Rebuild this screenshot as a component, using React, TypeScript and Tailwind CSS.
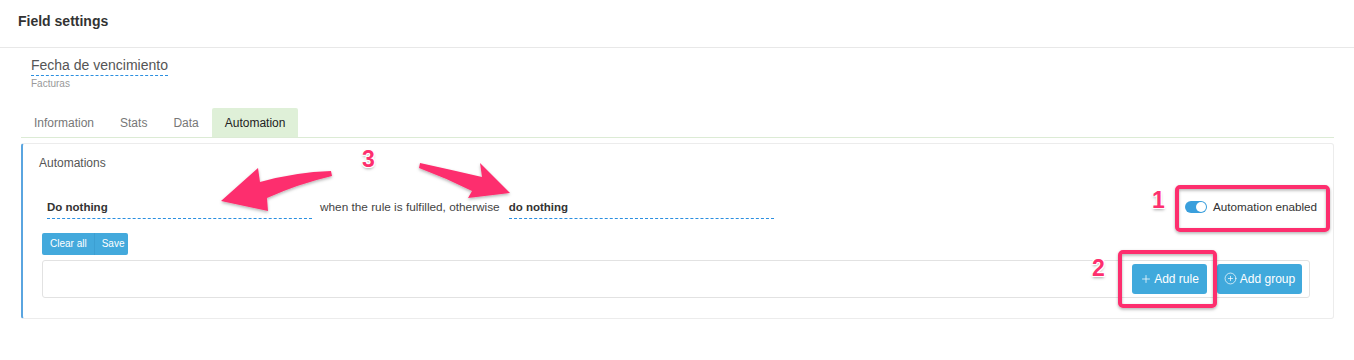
import { Plus, CirclePlus } from "lucide-react";

const PINK = "#fd2f6e";

// ─── Callout pieces (annotations drawn over the screenshot) ──────────
function Num({ n, x, y }: { n: string; x: number; y: number }) {
  return (
    <span
      className="absolute text-[23px] font-bold leading-none text-[#fd2f6e] [text-shadow:-1px_-1px_0_#fff,1px_-1px_0_#fff,-1px_1px_0_#fff,1px_1px_0_#fff,0_2px_3px_rgba(0,0,0,0.35)]"
      style={{ left: x, top: y }}
    >
      {n}
    </span>
  );
}

function Arrows() {
  return (
    <svg className="pointer-events-none absolute left-0 top-0" width={1354} height={360}>
      <defs>
        <filter id="sh" x="-20%" y="-20%" width="140%" height="160%">
          <feDropShadow dx="0" dy="1.5" stdDeviation="1.5" floodColor="#000" floodOpacity="0.3" />
        </filter>
      </defs>
      <g fill={PINK} filter="url(#sh)">
        <path d="M221 201 L258 168 L260 182 Q296 172 331 171 L332 176 Q298 184 267 198 L268 211 Z" />
        <path d="M420 163 Q452 170 482 177 L480 163 L510 193 L468 198 L472 191 Q446 178 419 168 Z" />
      </g>
      <g fill="none" stroke={PINK} strokeWidth={4} filter="url(#sh)">
        <rect x={1177} y={187} width={151} height={43} rx={3} />
        <rect x={1120} y={252} width={95} height={54} rx={3} />
      </g>
    </svg>
  );
}

function Tab({ label, active }: { label: string; active?: boolean }) {
  return (
    <div
      className={
        active
          ? "flex h-[29px] items-center rounded-t-[2px] bg-[#dff0d8] px-[13px] text-[12px] text-[#222]"
          : "flex h-[29px] items-center px-[13px] text-[12px] text-[#777]"
      }
    >
      {label}
    </div>
  );
}

export default function App() {
  return (
    <div className="relative h-[360px] w-full overflow-hidden bg-white font-['Liberation_Sans',Arial,sans-serif]">
      {/* Header */}
      <div className="h-[48px] border-b border-[#e8e8e8] pl-[18px] pt-[9px]">
        <span className="text-[14px] font-bold text-[#333]">Field settings</span>
      </div>

      <div className="px-[21px] pr-[20px]">
        {/* Field name */}
        <div className="ml-[10px] mt-[9px] flex flex-col items-start">
          <span className="border-b border-dashed border-[#2b8fe0] pb-[1px] text-[14px] leading-[17px] text-[#555]">
            Fecha de vencimiento
          </span>
          <span className="mt-[2px] text-[10px] leading-[12px] text-[#999]">Facturas</span>
        </div>

        {/* Tabs */}
        <div className="mt-[18px] flex border-b border-[#dcebd5]">
          <Tab label="Information" />
          <Tab label="Stats" />
          <Tab label="Data" />
          <Tab label="Automation" active />
        </div>

        {/* Panel */}
        <div className="mt-[5px] rounded-[3px] border border-l-2 border-[#ececec] border-l-[#5aa5e0] pb-[20px] pl-[16px] pr-[16px] pt-[10px]">
          <div className="text-[12px] text-[#555]">Automations</div>

          <div className="mt-[27px] flex items-end">
            <div className="ml-[8px] w-[265px] border-b border-dashed border-[#2b8fe0] pb-[1px] text-[11.5px] font-bold text-[#333]">
              Do nothing
            </div>
            <span className="ml-[8px] pb-[2px] text-[11.8px] text-[#444]">when the rule is fulfilled, otherwise</span>
            <div className="ml-[9px] w-[265px] border-b border-dashed border-[#2b8fe0] pb-[1px] text-[11.5px] font-bold text-[#333]">
              do nothing
            </div>
            <div className="mb-[3px] ml-auto flex items-center gap-[6px] self-center">
              <span className="relative flex h-[12px] w-[22px] items-center rounded-full bg-[#3a9fdc]">
                <span className="absolute right-[1px] h-[10px] w-[10px] rounded-full bg-white" />
              </span>
              <span className="text-[11.7px] leading-[14px] text-[#333]">Automation enabled</span>
            </div>
          </div>

          <div className="ml-[3px] mt-[14px] flex h-[22px] w-[86px] items-center overflow-hidden rounded-[2px] bg-[#43a9dc] text-[10px] text-white">
            <span className="flex h-full items-center border-r border-[#3c9fd2] pl-[8px] pr-[7px]">Clear all</span>
            <span className="flex h-full items-center pl-[7px]">Save</span>
          </div>

          <div className="ml-[3px] mr-[7px] mt-[5px] flex h-[38px] items-center justify-end gap-[10px] rounded-[3px] border border-[#e2e2e2] pr-[7px]">
            <button className="flex h-[30px] w-[75px] items-center justify-center gap-[2px] rounded-[3px] bg-[#40a9dc] text-[12px] text-white">
              <Plus size={12} strokeWidth={1.5} />
              Add rule
            </button>
            <button className="flex h-[30px] w-[85px] items-center justify-center gap-[3px] rounded-[3px] bg-[#40a9dc] text-[12px] text-white">
              <CirclePlus size={13} strokeWidth={1.3} />
              Add group
            </button>
          </div>
        </div>
      </div>

      <Arrows />
      <Num n="3" x={362} y={148} />
      <Num n="1" x={1152} y={189} />
      <Num n="2" x={1092} y={257} />
    </div>
  );
}
